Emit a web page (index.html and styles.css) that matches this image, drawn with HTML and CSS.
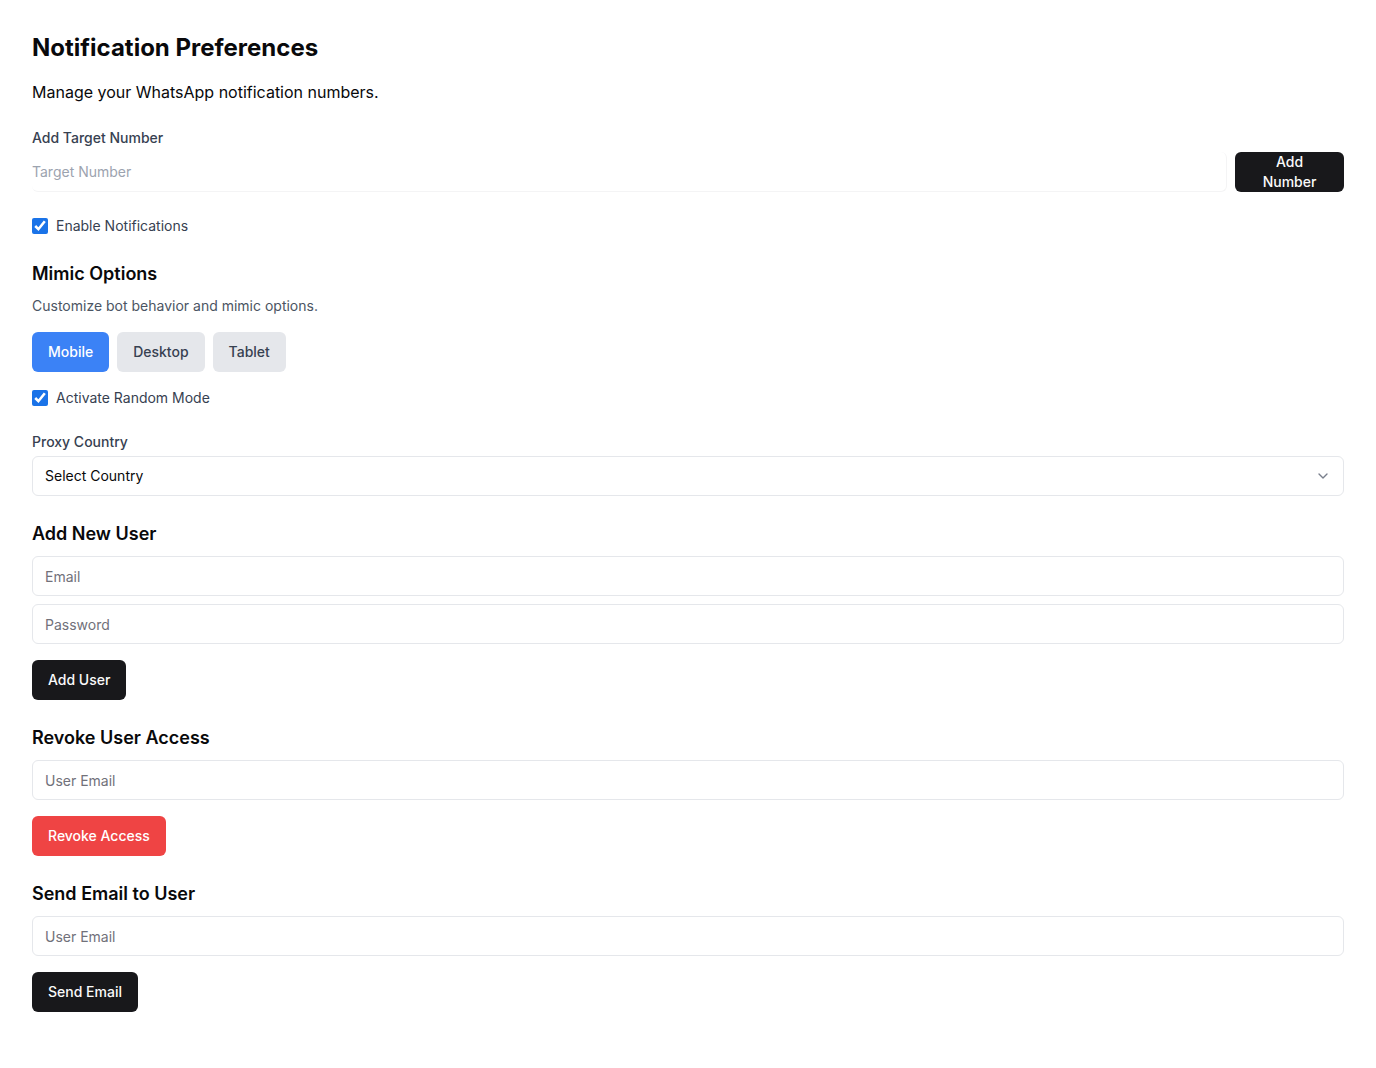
FILE: index.html
```html
<!DOCTYPE html>
<html lang="en">
<head>
<meta charset="utf-8">
<title>Notification Preferences</title>
<link rel="stylesheet" href="styles.css">
</head>
<body>
<main class="page">
  <section class="block">
    <h1 class="title">Notification Preferences</h1>
    <p class="lead">Manage your WhatsApp notification numbers.</p>
  </section>

  <section class="block">
    <label class="label">Add Target Number</label>
    <div class="target-row">
      <input class="target-input" type="text" placeholder="Target Number">
      <button class="btn btn-dark btn-add-number">Add Number</button>
    </div>
  </section>

  <section class="block">
    <label class="check"><input type="checkbox" checked><span>Enable Notifications</span></label>
  </section>

  <section class="block">
    <h2 class="subtitle">Mimic Options</h2>
    <p class="desc">Customize bot behavior and mimic options.</p>
    <div class="seg">
      <button class="btn btn-blue">Mobile</button>
      <button class="btn btn-gray">Desktop</button>
      <button class="btn btn-gray">Tablet</button>
    </div>
    <label class="check check-spaced"><input type="checkbox" checked><span>Activate Random Mode</span></label>
  </section>

  <section class="block">
    <label class="label">Proxy Country</label>
    <div class="select">
      <span>Select Country</span>
      <svg class="chev" width="16" height="16" viewBox="0 0 24 24" fill="none" stroke="#6b7280" stroke-width="2" stroke-linecap="round" stroke-linejoin="round"><path d="m6 9 6 6 6-6"/></svg>
    </div>
  </section>

  <section class="block">
    <h2 class="subtitle">Add New User</h2>
    <div class="stack">
      <input class="field" type="email" placeholder="Email">
      <input class="field" type="password" placeholder="Password">
    </div>
    <button class="btn btn-dark btn-after">Add User</button>
  </section>

  <section class="block">
    <h2 class="subtitle">Revoke User Access</h2>
    <div class="stack">
      <input class="field" type="email" placeholder="User Email">
    </div>
    <button class="btn btn-red btn-after">Revoke Access</button>
  </section>

  <section class="block">
    <h2 class="subtitle">Send Email to User</h2>
    <div class="stack">
      <input class="field" type="email" placeholder="User Email">
    </div>
    <button class="btn btn-dark btn-after">Send Email</button>
  </section>
</main>
</body>
</html>
```

FILE: styles.css
```css
* { box-sizing: border-box; }
html, body { margin: 0; padding: 0; background: #fff; }
body {
  font-family: Inter, "Noto Sans", Arial, sans-serif;
  color: #09090b;
}
.page {
  padding: 32px;
  display: flex;
  flex-direction: column;
  gap: 24px;
}
.block { display: flex; flex-direction: column; }
.title {
  margin: 0;
  font-size: 24px;
  line-height: 32px;
  font-weight: 700;
  color: #09090b;
}
.lead {
  margin: 16px 0 0;
  font-size: 16px;
  line-height: 24px;
  color: #09090b;
}
.label {
  font-size: 14px;
  line-height: 20px;
  font-weight: 500;
  color: #374151;
  margin-bottom: 4px;
}
.target-row {
  display: flex;
  gap: 8px;
  align-items: stretch;
}
.target-input {
  flex: 1;
  height: 40px;
  border: 0;
  border-bottom: 1px solid #f4f4f5;
  border-right: 1px solid #f4f4f5;
  border-radius: 0 6px 6px 6px;
  padding: 0;
  font: inherit;
  font-size: 14px;
  color: #111827;
  background: #fff;
  outline: none;
}
.target-input::placeholder { color: #9ca3af; }
.btn {
  font-family: inherit;
  font-size: 14px;
  line-height: 20px;
  font-weight: 500;
  height: 40px;
  padding: 0 16px;
  border: none;
  border-radius: 6px;
  cursor: pointer;
}
.btn-dark { background: #18181b; color: #fafafa; }
.btn-blue { background: #3b82f6; color: #fff; }
.btn-gray { background: #e5e7eb; color: #374151; }
.btn-red { background: #ef4444; color: #fff; }
.btn-add-number {
  width: 109px;
  padding: 0 24px;
  flex: none;
}
.btn-after { align-self: flex-start; margin-top: 16px; }
.check {
  display: flex;
  align-items: center;
  gap: 8px;
  font-size: 14px;
  line-height: 20px;
  color: #374151;
}
.check input {
  margin: 0;
  width: 16px;
  height: 16px;
  accent-color: #1a73e8;
}
.check-spaced { margin-top: 16px; }
.subtitle {
  margin: 0;
  font-size: 18px;
  line-height: 28px;
  font-weight: 600;
  color: #09090b;
}
.desc {
  margin: 8px 0 0;
  font-size: 14px;
  line-height: 20px;
  color: #4b5563;
}
.seg {
  display: flex;
  gap: 8px;
  margin-top: 16px;
}
.select {
  height: 40px;
  border: 1px solid #e5e7eb;
  border-radius: 6px;
  padding: 0 12px 1px;
  display: flex;
  align-items: center;
  justify-content: space-between;
  font-size: 14px;
  color: #09090b;
}
.chev { opacity: 0.9; }
.stack {
  display: flex;
  flex-direction: column;
  gap: 8px;
  margin-top: 8px;
}
.field {
  height: 40px;
  border: 1px solid #e5e7eb;
  border-radius: 6px;
  padding: 0 12px;
  font: inherit;
  font-size: 14px;
  color: #09090b;
  background: #fff;
  outline: none;
}
.field::placeholder { color: #71717a; }
```
